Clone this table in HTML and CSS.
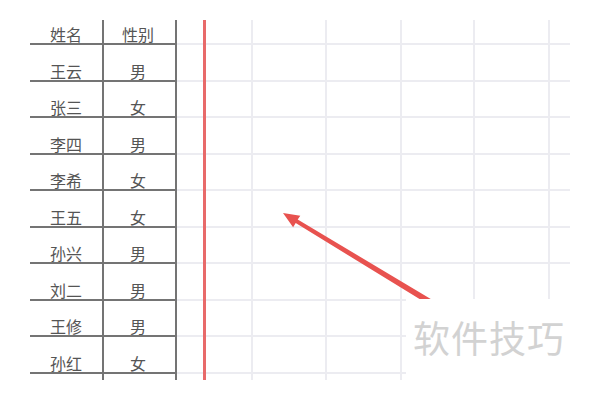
FILE: index.html
```html
<!DOCTYPE html>
<html lang="zh">
<head>
<meta charset="utf-8">
<link rel="stylesheet" href="styles.css">
</head>
<body>
<div class="page">
  <div class="sheet">
    <div class="c n">姓名</div><div class="c s">性别</div><i class="g first"></i><i class="g"></i><i class="g"></i><i class="g"></i><i class="g"></i><i class="g"></i>
    <div class="c n">王云</div><div class="c s">男</div><i class="g first"></i><i class="g"></i><i class="g"></i><i class="g"></i><i class="g"></i><i class="g"></i>
    <div class="c n">张三</div><div class="c s">女</div><i class="g first"></i><i class="g"></i><i class="g"></i><i class="g"></i><i class="g"></i><i class="g"></i>
    <div class="c n">李四</div><div class="c s">男</div><i class="g first"></i><i class="g"></i><i class="g"></i><i class="g"></i><i class="g"></i><i class="g"></i>
    <div class="c n">李希</div><div class="c s">女</div><i class="g first"></i><i class="g"></i><i class="g"></i><i class="g"></i><i class="g"></i><i class="g"></i>
    <div class="c n">王五</div><div class="c s">女</div><i class="g first"></i><i class="g"></i><i class="g"></i><i class="g"></i><i class="g"></i><i class="g"></i>
    <div class="c n">孙兴</div><div class="c s">男</div><i class="g first"></i><i class="g"></i><i class="g"></i><i class="g"></i><i class="g"></i><i class="g"></i>
    <div class="c n">刘二</div><div class="c s">男</div><i class="g first"></i><i class="g"></i><i class="g"></i><i class="g"></i><i class="g"></i><i class="g"></i>
    <div class="c n">王修</div><div class="c s">男</div><i class="g first"></i><i class="g"></i><i class="g"></i><i class="g"></i><i class="g"></i><i class="g"></i>
    <div class="c n">孙红</div><div class="c s">女</div><i class="g first"></i><i class="g"></i><i class="g"></i><i class="g"></i><i class="g"></i><i class="g"></i>
    <div class="c n end"></div><div class="c s end"></div><i class="g first end"></i><i class="g end"></i><i class="g end"></i><i class="g end"></i><i class="g end"></i><i class="g end"></i>
  </div>
  <div class="redline"></div>
  <svg class="arrow" width="600" height="400" viewBox="0 0 600 400">
    <polygon fill="#e8524f" points="283,213 300.3,215.7 297.7,219.6 436.6,302.4 433.4,307.6 295.7,223 293.1,227.3"/>
  </svg>
  <div class="wm"><span>软件技巧</span></div>
</div>
</body>
</html>
```
FILE: styles.css
```css
* { box-sizing: border-box; }
html, body { margin: 0; padding: 0; background: #fff; }
.page {
  position: relative;
  width: 600px;
  height: 400px;
  overflow: hidden;
  padding: 20px 0 0 30px;
  font-family: "Noto Sans CJK SC", "Noto Sans", sans-serif;
}
.sheet {
  display: grid;
  grid-template-columns: 72px 75px 74px 74px 75px 73px 75px 22px;
  grid-template-rows: 25px repeat(9, 36.5px) 6px;
}
.c {
  display: flex;
  justify-content: center;
  align-items: flex-end;
  font-size: 16px;
  line-height: 16px;
  padding-bottom: 1px;
  color: #555;
  border-bottom: 2px solid #747474;
}
.s {
  border-left: 2px solid #747474;
  border-right: 2px solid #747474;
  padding-right: 3px;
}
.g {
  display: block;
  border-bottom: 2px solid #ececf1;
  border-left: 2px solid #ececf1;
}
.g.first { border-left: none; }
.end { border-bottom: none; }
.redline {
  position: absolute;
  left: 203px;
  top: 20px;
  width: 3px;
  height: 360px;
  background: #e86a6a;
}
.arrow {
  position: absolute;
  left: 0;
  top: 0;
}
.wm {
  position: absolute;
  left: 406px;
  top: 299px;
  width: 194px;
  height: 101px;
  background: #fff;
  padding: 18px 0 0 7px;
}
.wm span {
  font-size: 37px;
  line-height: 40px;
  color: #d2d2d2;
  letter-spacing: 1px;
}
```
